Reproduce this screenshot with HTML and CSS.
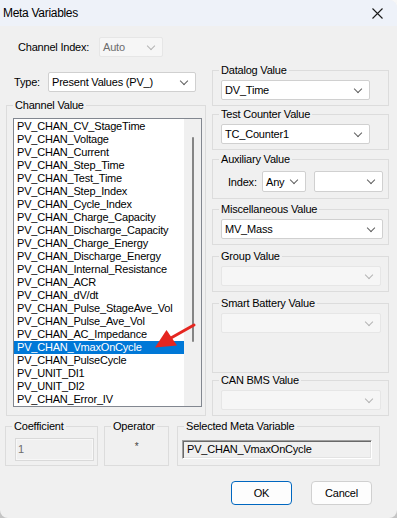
FILE: index.html
```html
<!DOCTYPE html>
<html lang="en">
<head>
    <meta charset="UTF-8">
    <meta name="viewport" content="width=device-width, initial-scale=1.0">
    <title>Meta Variables</title>
    <link rel="stylesheet" href="styles.css">
</head>
<body>
    <div class="window">
        <div class="titlebar">
            <span class="title">Meta Variables</span>
            <svg class="close" width="11" height="11" viewBox="0 0 11 11">
                <path d="M0.5 0.5 L10.5 10.5 M10.5 0.5 L0.5 10.5" stroke="#1a1a1a" stroke-width="1.1" fill="none"/>
            </svg>
        </div>

        <div class="main">
            <div class="left">
                <div class="field-row index-row">
                    <label class="index-label">Channel Index:</label>
                    <div class="combo disabled w-index">Auto</div>
                </div>
                <div class="field-row type-row">
                    <label class="type-label">Type:</label>
                    <div class="combo w-type">Present Values (PV_)</div>
                </div>

                <fieldset class="group channel-group">
                    <legend>Channel Value</legend>
                    <div class="group-body channel-body">
                        <div class="listbox">
                            <ul class="items">
                                <li>PV_CHAN_CV_StageTime</li>
                                <li>PV_CHAN_Voltage</li>
                                <li>PV_CHAN_Current</li>
                                <li>PV_CHAN_Step_Time</li>
                                <li>PV_CHAN_Test_Time</li>
                                <li>PV_CHAN_Step_Index</li>
                                <li>PV_CHAN_Cycle_Index</li>
                                <li>PV_CHAN_Charge_Capacity</li>
                                <li>PV_CHAN_Discharge_Capacity</li>
                                <li>PV_CHAN_Charge_Energy</li>
                                <li>PV_CHAN_Discharge_Energy</li>
                                <li>PV_CHAN_Internal_Resistance</li>
                                <li>PV_CHAN_ACR</li>
                                <li>PV_CHAN_dV/dt</li>
                                <li>PV_CHAN_Pulse_StageAve_Vol</li>
                                <li>PV_CHAN_Pulse_Ave_Vol</li>
                                <li>PV_CHAN_AC_Impedance</li>
                                <li class="selected">PV_CHAN_VmaxOnCycle</li>
                                <li>PV_CHAN_PulseCycle</li>
                                <li>PV_UNIT_DI1</li>
                                <li>PV_UNIT_DI2</li>
                                <li>PV_CHAN_Error_IV</li>
                            </ul>
                            <div class="scrollbar"><div class="thumb"></div></div>
                            <!-- red pointer drawn over the list -->
                            <svg class="arrow" width="50" height="35" viewBox="0 0 50 35">
                                <line x1="44" y1="6" x2="20" y2="19.5" stroke="#e52620" stroke-width="3" stroke-linecap="round"/>
                                <polygon points="5,28.5 16.5,11 27,26.5" fill="#e52620"/>
                            </svg>
                        </div>
                    </div>
                </fieldset>
            </div>

            <div class="right">
                <fieldset class="group g-datalog">
                    <legend>Datalog Value</legend>
                    <div class="group-body">
                        <div class="combo w-short">DV_Time</div>
                    </div>
                </fieldset>
                <fieldset class="group g-counter">
                    <legend>Test Counter Value</legend>
                    <div class="group-body">
                        <div class="combo w-short">TC_Counter1</div>
                    </div>
                </fieldset>
                <fieldset class="group g-aux">
                    <legend>Auxiliary Value</legend>
                    <div class="group-body aux-body">
                        <label class="aux-label">Index:</label>
                        <div class="combo tall w-any">Any</div>
                        <div class="combo tall w-aux"></div>
                    </div>
                </fieldset>
                <fieldset class="group g-misc">
                    <legend>Miscellaneous Value</legend>
                    <div class="group-body">
                        <div class="combo w-long">MV_Mass</div>
                    </div>
                </fieldset>
                <fieldset class="group g-group">
                    <legend>Group Value</legend>
                    <div class="group-body">
                        <div class="combo disabled w-wide"></div>
                    </div>
                </fieldset>
                <fieldset class="group g-smart">
                    <legend>Smart Battery Value</legend>
                    <div class="group-body smart-body">
                        <div class="combo disabled w-wide"></div>
                    </div>
                </fieldset>
                <fieldset class="group g-can">
                    <legend>CAN BMS Value</legend>
                    <div class="group-body">
                        <div class="combo disabled w-wide"></div>
                    </div>
                </fieldset>
            </div>
        </div>

        <div class="bottom">
            <fieldset class="group g-coef">
                <legend>Coefficient</legend>
                <div class="group-body bottom-body coef-body">
                    <div class="textbox disabled-text">1</div>
                </div>
            </fieldset>
            <fieldset class="group g-op">
                <legend>Operator</legend>
                <div class="group-body bottom-body op-body">
                    <span class="op">*</span>
                </div>
            </fieldset>
            <fieldset class="group g-selected">
                <legend>Selected Meta Variable</legend>
                <div class="group-body bottom-body sel-body">
                    <div class="sunken">PV_CHAN_VmaxOnCycle</div>
                </div>
            </fieldset>
        </div>

        <div class="buttons">
            <button class="btn btn-default">OK</button>
            <button class="btn">Cancel</button>
        </div>
    </div>
</body>
</html>
```

FILE: styles.css
```css
* {
    box-sizing: border-box;
}
html, body {
    margin: 0;
    padding: 0;
}
body {
    background: linear-gradient(#f7f7f7, #c4c4c4);
    font-family: "Liberation Sans", Arial, sans-serif;
    font-size: 11px;
    letter-spacing: -0.2px;
    color: #000;
}
.window {
    width: 397px;
    height: 518px;
    background-color: #f0f0f0;
    border-radius: 0 8px 8px 8px;
    overflow: hidden;
}
.titlebar {
    height: 26px;
    background-color: #eef2f9;
    display: flex;
    align-items: center;
    justify-content: space-between;
    padding: 0 14px 0 3px;
}
.title {
    font-size: 12px;
    letter-spacing: -0.3px;
}
.close {
    display: block;
}

/* main area */
.main {
    display: flex;
    gap: 6px;
    padding-left: 6px;
}
.left {
    width: 200px;
}
.right {
    width: 177px;
    padding-top: 38px;
    display: flex;
    flex-direction: column;
}
.field-row {
    display: flex;
    align-items: center;
}
.index-row {
    margin: 11px 0 0 12px;
}
.index-label {
    width: 81px;
}
.type-row {
    margin: 15px 0 0 8px;
}
.type-label {
    width: 34px;
}

/* combo boxes */
.combo {
    height: 20px;
    background-color: #fff;
    border: 1px solid #d0d0d0;
    border-radius: 2px;
    display: flex;
    align-items: center;
    padding-left: 3px;
    white-space: nowrap;
}
.combo::after {
    content: "";
    width: 5px;
    height: 5px;
    border-right: 1px solid #606060;
    border-bottom: 1px solid #606060;
    transform: rotate(45deg);
    margin: 0 8px 3px auto;
}
.combo.tall {
    height: 21px;
}
.combo.disabled {
    background-color: #f6f6f6;
    border-color: #e6e6e6;
    color: #6d6d6d;
}
.combo.disabled::after {
    border-color: #b4b4b4;
}
.w-index { width: 64px; }
.w-type { width: 148px; }
.w-short { width: 149px; }
.w-long { width: 162px; }
.w-wide { width: 160px; }
.w-any { width: 44px; }
.w-aux { width: 69px; }

/* group boxes */
.group {
    margin: 0;
    padding: 0;
    border: 1px solid #dcdcdc;
    min-width: 0;
}
.group legend {
    padding: 0 2px;
    margin-left: 6px;
    line-height: 13px;
}
.group-body {
    padding: 3px 0 5px 8px;
}
.g-counter { margin-top: 2px; }
.g-aux { margin-top: 3px; }
.g-misc { margin-top: 4px; }
.g-group { margin-top: 5px; }
.g-smart { margin-top: 5px; }
.g-can { margin-top: 1px; }
.aux-body {
    display: flex;
    align-items: center;
    padding: 5px 0 6px 15px;
}
.aux-label {
    width: 34px;
}
.aux-body .w-any {
    margin-right: 8px;
}
.smart-body {
    padding-bottom: 39px;
}

/* channel list */
.channel-group {
    margin-top: 7px;
}
.channel-body {
    padding: 6px 3px 8px 6px;
}
.listbox {
    position: relative;
    display: flex;
    height: 289px;
    border: 1px solid #828790;
    background-color: #fff;
}
.items {
    list-style: none;
    margin: 0;
    padding: 1px 0 0;
    flex: 1;
}
.items li {
    height: 13px;
    line-height: 13px;
    padding-left: 3px;
    white-space: nowrap;
}
.items li.selected {
    background-color: #0078d7;
    color: #fff;
}
.scrollbar {
    width: 17px;
    background-color: #f0f0f0;
    padding-top: 18px;
    display: flex;
    justify-content: center;
}
.thumb {
    width: 2px;
    height: 205px;
    background-color: #858585;
    border-radius: 1px;
}
.arrow {
    position: absolute;
    left: 136px;
    top: 200px;
    pointer-events: none;
}

/* bottom row */
.bottom {
    display: flex;
    padding-left: 5px;
    margin-top: 4px;
}
.g-coef { width: 93px; }
.g-op { width: 65px; margin-left: 6px; }
.g-selected { width: 203px; margin-left: 8px; }
.bottom-body {
    height: 32px;
    display: flex;
    align-items: center;
    padding: 0;
}
.coef-body {
    padding-left: 9px;
}
.textbox {
    width: 79px;
    height: 23px;
    border: 1px solid #d9d9d9;
    box-shadow: inset 0 0 0 1px #f7f7f7;
    display: flex;
    align-items: center;
    padding-left: 2px;
}
.disabled-text {
    color: #6d6d6d;
}
.op-body {
    justify-content: center;
    align-items: flex-start;
    padding-top: 8px;
}
.op {
    color: #444;
    font-size: 10px;
}
.sel-body {
    padding-left: 4px;
}
.sunken {
    width: 190px;
    height: 19px;
    border-style: solid;
    border-width: 1px;
    border-color: #a0a0a0 #fff #fff #a0a0a0;
    box-shadow: inset 1px 1px 0 #696969, inset -1px -1px 0 #e3e3e3;
    display: flex;
    align-items: center;
    padding-left: 4px;
    white-space: nowrap;
}

/* buttons */
.buttons {
    display: flex;
    justify-content: flex-end;
    gap: 19px;
    padding: 15px 25px 0 0;
}
.btn {
    width: 61px;
    height: 24px;
    background-color: #fdfdfd;
    border: 1px solid #d0d0d0;
    border-radius: 4px;
    font-family: inherit;
    font-size: 11px;
    letter-spacing: -0.2px;
    color: #000;
    padding: 0;
}
.btn-default {
    border-color: #0067c0;
}
```
